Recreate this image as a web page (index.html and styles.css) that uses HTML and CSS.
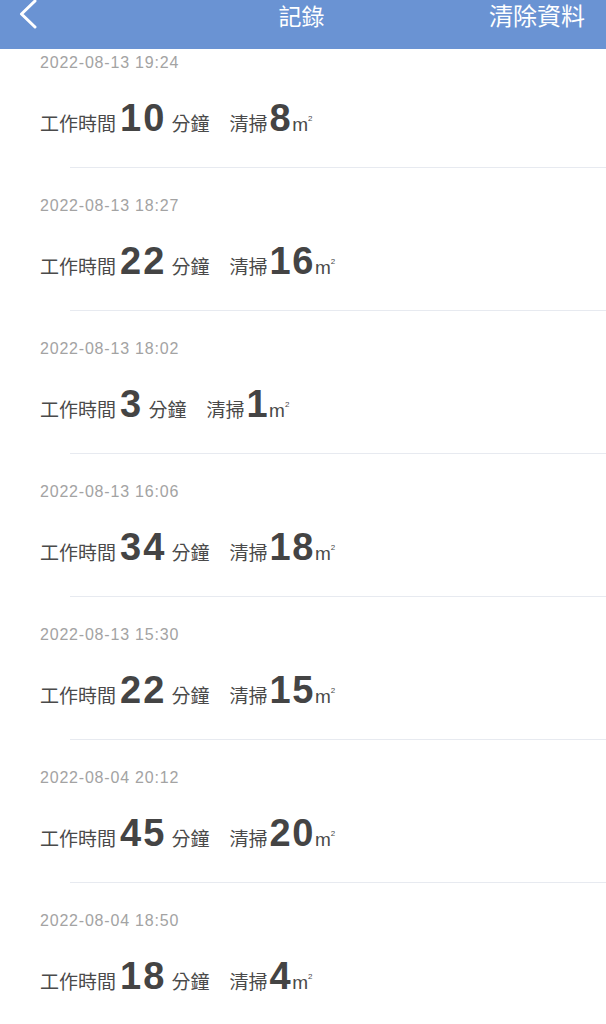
FILE: index.html
```html
<!DOCTYPE html>
<html lang="zh-Hant">
<head>
<meta charset="utf-8">
<title>記錄</title>
<link rel="stylesheet" href="styles.css">
</head>
<body>
<div class="screen">
  <header class="topbar">
    <div class="back">
      <svg width="22" height="30" viewBox="0 0 22 30"><polyline points="17,1 3.5,14 17,27" fill="none" stroke="#fff" stroke-width="3" stroke-linecap="round" stroke-linejoin="round"/></svg>
    </div>
    <div class="title">記錄</div>
    <div class="action">清除資料</div>
  </header>
  <main class="viewport">
    <ul class="records">
      <li class="record"><div class="time">2022-08-13 19:24</div><div class="stats"><span class="lbl">工作時間</span><span class="num">10</span> <span class="lbl">分鐘</span><span class="lbl gap">清掃</span><span class="num">8</span><span class="unit">m<sup>2</sup></span></div></li>
      <li class="record"><div class="time">2022-08-13 18:27</div><div class="stats"><span class="lbl">工作時間</span><span class="num">22</span> <span class="lbl">分鐘</span><span class="lbl gap">清掃</span><span class="num">16</span><span class="unit">m<sup>2</sup></span></div></li>
      <li class="record"><div class="time">2022-08-13 18:02</div><div class="stats"><span class="lbl">工作時間</span><span class="num">3</span> <span class="lbl">分鐘</span><span class="lbl gap">清掃</span><span class="num">1</span><span class="unit">m<sup>2</sup></span></div></li>
      <li class="record"><div class="time">2022-08-13 16:06</div><div class="stats"><span class="lbl">工作時間</span><span class="num">34</span> <span class="lbl">分鐘</span><span class="lbl gap">清掃</span><span class="num">18</span><span class="unit">m<sup>2</sup></span></div></li>
      <li class="record"><div class="time">2022-08-13 15:30</div><div class="stats"><span class="lbl">工作時間</span><span class="num">22</span> <span class="lbl">分鐘</span><span class="lbl gap">清掃</span><span class="num">15</span><span class="unit">m<sup>2</sup></span></div></li>
      <li class="record"><div class="time">2022-08-04 20:12</div><div class="stats"><span class="lbl">工作時間</span><span class="num">45</span> <span class="lbl">分鐘</span><span class="lbl gap">清掃</span><span class="num">20</span><span class="unit">m<sup>2</sup></span></div></li>
      <li class="record"><div class="time">2022-08-04 18:50</div><div class="stats"><span class="lbl">工作時間</span><span class="num">18</span> <span class="lbl">分鐘</span><span class="lbl gap">清掃</span><span class="num">4</span><span class="unit">m<sup>2</sup></span></div></li>
    </ul>
  </main>
</div>
</body>
</html>
```

FILE: styles.css
```css
* { box-sizing: border-box; }
html, body { margin: 0; padding: 0; background: #fff; }
body {
  font-family: "Liberation Sans", "Noto Sans CJK TC", sans-serif;
  color: #444;
}
.screen {
  width: 606px;
  height: 1024px;
  display: flex;
  flex-direction: column;
  overflow: hidden;
}
.topbar {
  flex: 0 0 49px;
  height: 49px;
  background: #6a93d3;
  display: grid;
  grid-template-columns: 1fr auto 1fr;
  align-items: start;
  color: #fff;
  font-family: "Noto Sans CJK TC", sans-serif;
  font-size: 23px;
  line-height: 30px;
  padding: 0 21px 0 18px;
}
.back { height: 30px; display: flex; align-items: flex-start; }
.back svg { display: block; }
.title { text-align: center; }
.action { text-align: right; font-size: 24px; }
.viewport { flex: 1; overflow: hidden; }
.records {
  list-style: none;
  margin: -24px 0 0 0;
  padding: 0;
}
.record {
  height: 143px;
  padding: 28px 0 0 40px;
  display: flex;
  flex-direction: column;
  gap: 23px;
  background: linear-gradient(#e7eaf0, #e7eaf0) no-repeat 70px 100% / calc(100% - 70px) 1px;
}
.time {
  height: 20px;
  line-height: 20px;
  font-size: 16px;
  letter-spacing: 0.8px;
  color: #a3a3a3;
}
.stats {
  height: 44px;
  line-height: 44px;
  white-space: nowrap;
  font-size: 19px;
}
.lbl {
  font-family: "Noto Sans CJK TC", sans-serif;
  font-size: 19px;
  color: #4a4a4a;
}
.gap { margin-left: 20px; margin-right: 2px; }
.num {
  font-family: "Liberation Sans", sans-serif;
  font-weight: 700;
  font-size: 38px;
  color: #444;
  letter-spacing: 2px;
  margin-left: 4px;
}
.gap + .num { margin-left: 0; letter-spacing: 1.5px; }
.unit {
  font-family: "Liberation Sans", sans-serif;
  font-size: 19px;
  color: #4a4a4a;
  margin-left: 0;
}
.unit sup {
  font-size: 8px;
  vertical-align: 10px;
  line-height: 0;
}
```
